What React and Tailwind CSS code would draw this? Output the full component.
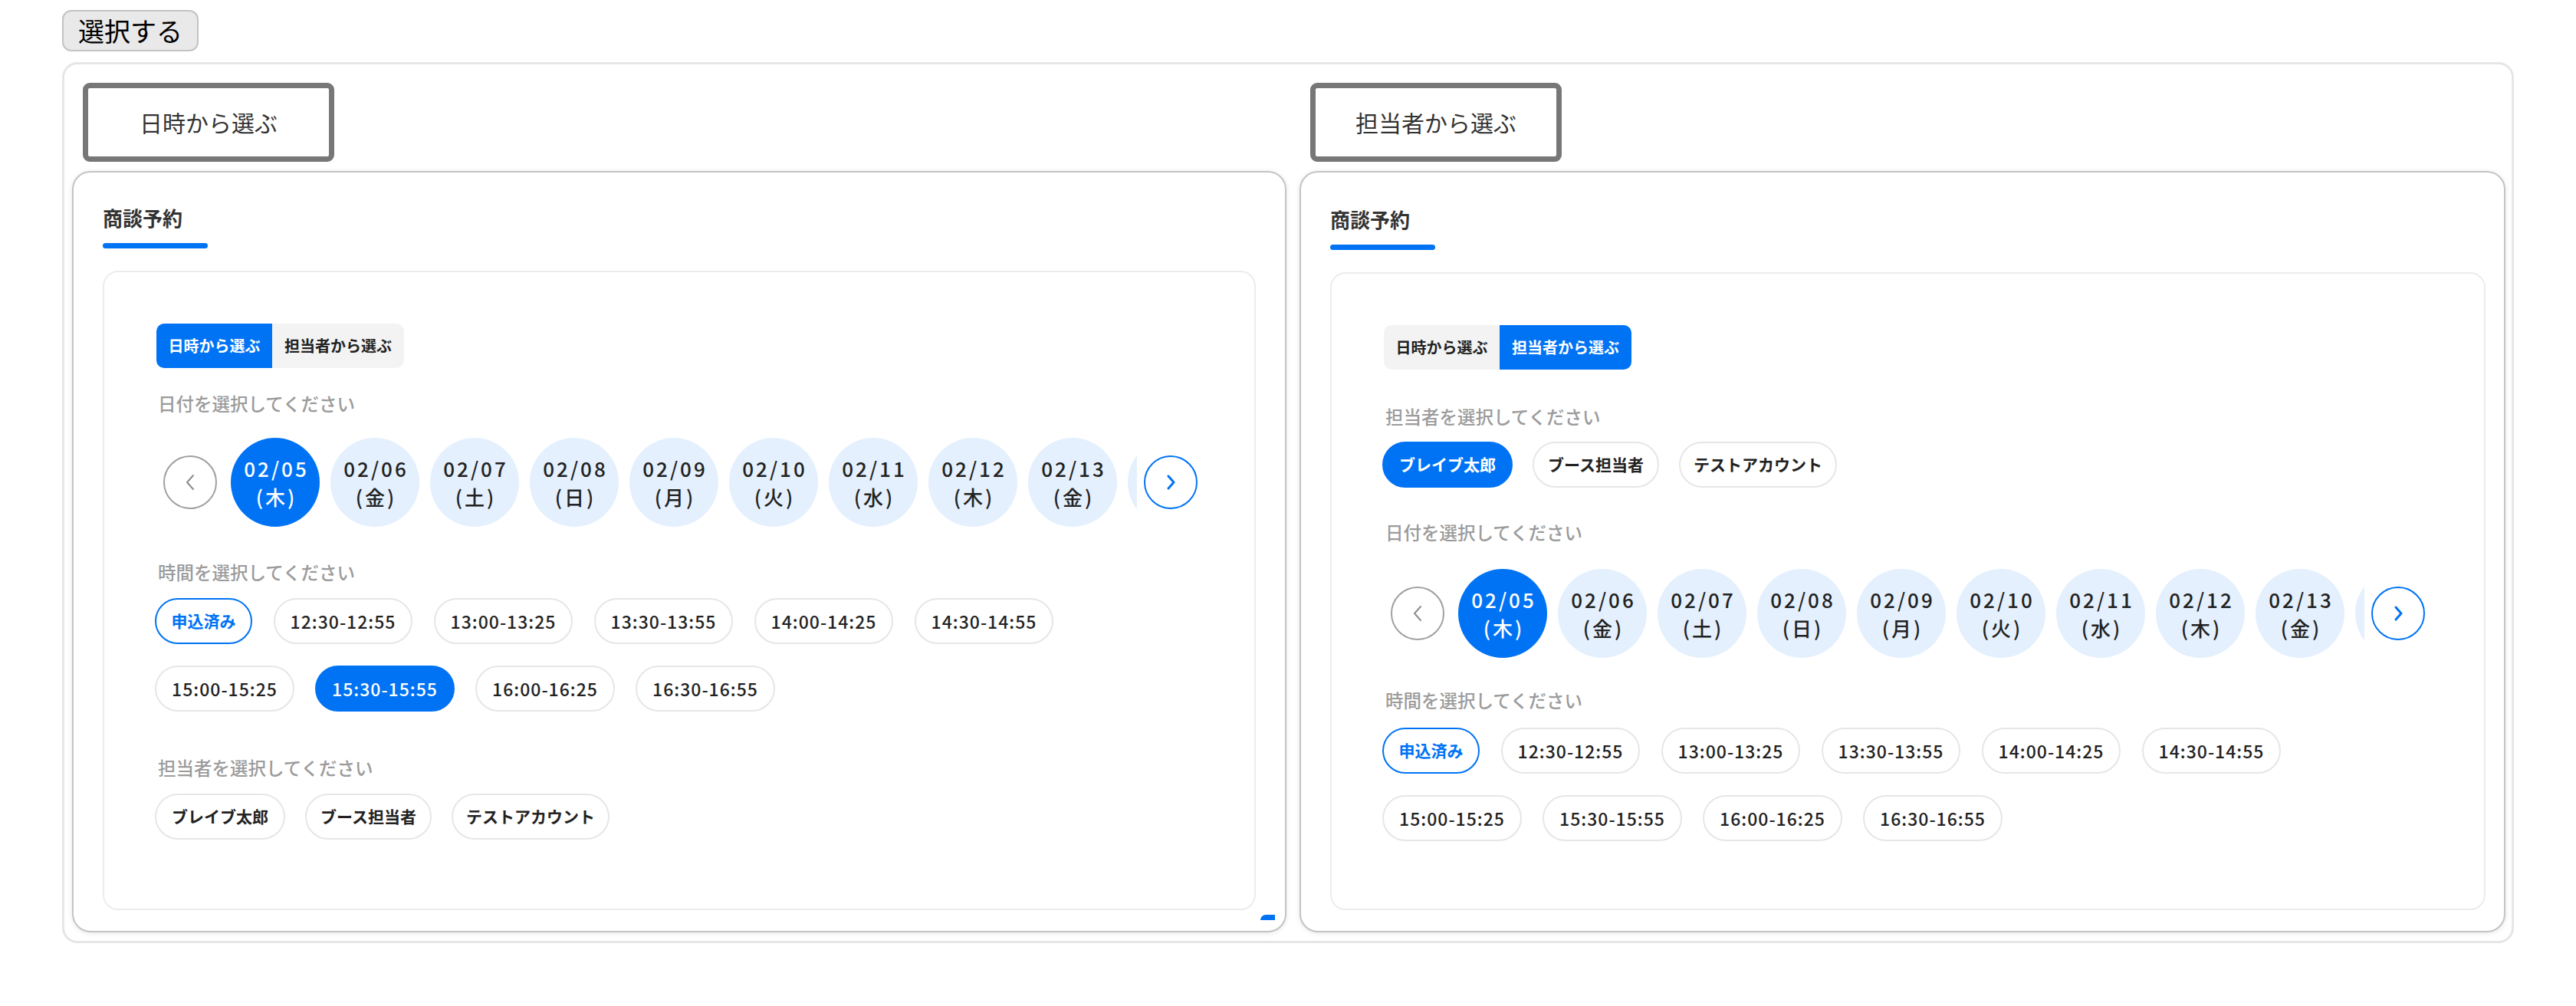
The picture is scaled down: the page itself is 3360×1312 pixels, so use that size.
import React from 'react';

const dates = [
  ['02/05', '木'], ['02/06', '金'], ['02/07', '土'], ['02/08', '日'], ['02/09', '月'],
  ['02/10', '火'], ['02/11', '水'], ['02/12', '木'], ['02/13', '金'],
];
const timesA = ['12:30-12:55', '13:00-13:25', '13:30-13:55', '14:00-14:25', '14:30-14:55'];
const timesB = ['15:00-15:25', '15:30-15:55', '16:00-16:25', '16:30-16:55'];
const staff = [
  ['ブレイブ太郎', 'w-[170px]'],
  ['ブース担当者', 'w-[165px]'],
  ['テストアカウント', 'w-[206px]'],
];

const pillStyles = {
  default: 'border-[#e6e6e6] bg-white text-[#222]',
  active: 'border-[#0073f5] bg-[#0073f5] text-white',
  outline: 'border-[#0073f5] bg-white text-[#0073f5]',
};

const Pill = ({ children, w, variant = 'default', className = '' }) => (
  <button className={`h-[60px] shrink-0 rounded-full border-2 flex items-center justify-center ${w} ${pillStyles[variant]} ${className}`}>
    {children}
  </button>
);

const Label = ({ children, className = '' }) => (
  <p className={`ml-[4px] h-[34px] leading-[34px] text-[23.5px] font-medium text-[#9b9b9b] ${className}`}>{children}</p>
);

const Toggle = ({ active }) => (
  <div className="ml-[2px] flex w-fit h-[58px] rounded-[10px] overflow-hidden bg-[#f3f3f3] text-[20px] font-semibold">
    <span className={`w-[151px] flex items-center justify-center ${active === 0 ? 'bg-[#0073f5] text-white' : 'text-[#222]'}`}>日時から選ぶ</span>
    <span className={`w-[172px] flex items-center justify-center ${active === 1 ? 'bg-[#0073f5] text-white' : 'text-[#222]'}`}>担当者から選ぶ</span>
  </div>
);

const DateRow = ({ className = '' }) => (
  <div className={`ml-[11px] flex items-center h-[118px] ${className}`}>
    <button className="w-[70px] h-[70px] shrink-0 rounded-full border-2 border-[#a0a0a0] flex items-center justify-center">
      <svg width="16" height="24" viewBox="0 0 16 24" fill="none" stroke="#8c8c8c" strokeWidth="2" strokeLinecap="round" strokeLinejoin="round">
        <path d="M12 3 L4 12 L12 21" />
      </svg>
    </button>
    <div className="ml-[18px] w-[1182px] overflow-hidden flex gap-[14px]">
      {dates.map(([d, w], i) => (
        <div
          key={d}
          className={`w-[116px] h-[116px] shrink-0 rounded-full flex flex-col items-center justify-center pl-[3px] text-[26px] leading-[37px] font-medium tracking-[3px] ${i === 0 ? 'bg-[#0073f5] text-white' : 'bg-[#e4f0fd] text-[#222]'}`}
        >
          <span>{d}</span>
          <span>({w})</span>
        </div>
      ))}
      {/* next date, scrolled out of view */}
      <div className="w-[116px] h-[116px] shrink-0 rounded-full bg-[#e4f0fd]" />
    </div>
    <button className="ml-[9px] w-[70px] h-[70px] shrink-0 rounded-full border-2 border-[#0073f5] flex items-center justify-center">
      <svg width="16" height="24" viewBox="0 0 16 24" fill="none" stroke="#0073f5" strokeWidth="3" strokeLinecap="round" strokeLinejoin="round">
        <path d="M5 4 L12 12 L5 20" />
      </svg>
    </button>
  </div>
);

const TimeRows = ({ selected, className = '' }) => (
  <div className={`flex flex-col gap-[28px] text-[23px] font-medium tracking-[1px] ${className}`}>
    <div className="flex gap-[28px]">
      <Pill w="w-[127px]" variant="outline" className="tracking-normal text-[21px] font-semibold">申込済み</Pill>
      {timesA.map((t) => (
        <Pill key={t} w="w-[181px]" variant={t === selected ? 'active' : 'default'}>{t}</Pill>
      ))}
    </div>
    <div className="flex gap-[27px]">
      {timesB.map((t) => (
        <Pill key={t} w="w-[182px]" variant={t === selected ? 'active' : 'default'}>{t}</Pill>
      ))}
    </div>
  </div>
);

const StaffRow = ({ selected, className = '' }) => (
  <div className={`flex gap-[26px] text-[21px] font-semibold ${className}`}>
    {staff.map(([name, w]) => (
      <Pill key={name} w={w} variant={name === selected ? 'active' : 'default'}>{name}</Pill>
    ))}
  </div>
);

const Card = ({ right, children }) => (
  <div className={`relative mt-[12px] h-[993px] rounded-[24px] border-2 border-[#c4c4c4] bg-white shadow-[0_1px_6px_rgba(0,0,0,0.1)] pl-[38px] pb-[27px] flex flex-col ${right ? 'pt-[41px] pr-[24px]' : 'pt-[39px] pr-[38px]'}`}>
    <h2 className="text-[26px] leading-[39px] font-bold text-[#333]">商談予約</h2>
    <div className="mt-[14px] h-[7px] w-[137px] rounded-full bg-[#0073f5]" />
    <div className="mt-[29px] flex-1 rounded-[20px] border-2 border-[#ececec] pt-[67px] pl-[66px]">
      {children}
    </div>
    {!right && <div className="absolute left-[1548px] top-[968px] h-[7px] w-[19px] rounded-tl-[19px] bg-[#0073f5]" />}
  </div>
);

const TabBox = ({ children }) => (
  <div className="ml-[14px] w-[328px] h-[103px] rounded-[9px] border-[7px] border-[#777] bg-white flex items-center justify-center text-[30px] text-[#333]">
    {children}
  </div>
);

export default function App() {
  return (
    <div className="font-['Noto_Sans_CJK_JP',sans-serif] bg-white min-h-[1312px] pl-[81px] pt-[13px]">
      <button className="h-[54px] w-[178px] rounded-[12px] border-2 border-[#c3c3c3] bg-[#e9e9e9] text-[34px] leading-none text-black">
        選択する
      </button>
      <div className="mt-[14px] w-[3198px] rounded-[20px] border-[3px] border-[#e6e6e6] pl-[10px] pr-[8px] pt-[24px] pb-[11px] grid grid-cols-[1584px_1573px] gap-x-[17px]">
        <div>
          <TabBox>日時から選ぶ</TabBox>
          <Card>
            <Toggle active={0} />
            <Label className="mt-[29px]">日付を選択してください</Label>
            <DateRow className="mt-[27px]" />
            <Label className="mt-[41px]">時間を選択してください</Label>
            <TimeRows className="mt-[17px]" selected="15:30-15:55" />
            <Label className="mt-[56px]">担当者を選択してください</Label>
            <StaffRow className="mt-[17px]" />
          </Card>
        </div>
        <div>
          <TabBox>担当者から選ぶ</TabBox>
          <Card right>
            <Toggle active={1} />
            <Label className="mt-[44px]">担当者を選択してください</Label>
            <StaffRow className="mt-[16px]" selected="ブレイブ太郎" />
            <Label className="mt-[41px]">日付を選択してください</Label>
            <DateRow className="mt-[30px]" />
            <Label className="mt-[37px]">時間を選択してください</Label>
            <TimeRows className="mt-[19px]" />
          </Card>
        </div>
      </div>
    </div>
  );
}
